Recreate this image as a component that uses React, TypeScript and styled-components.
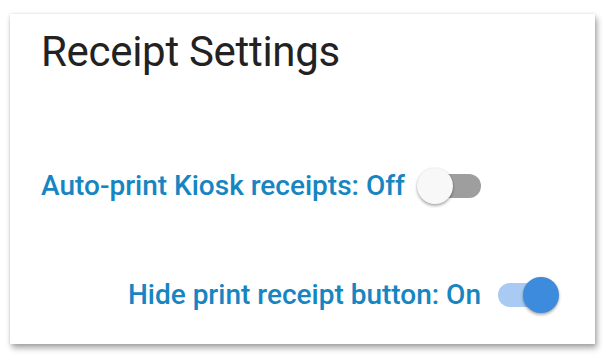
import React from "react";
import styled, { createGlobalStyle } from "styled-components";

const Global = createGlobalStyle`
  html, body {
    margin: 0;
    padding: 0;
    background: #ffffff;
    width: 607px;
    height: 358px;
    overflow: hidden;
  }
  body {
    font-family: Roboto, "Noto Sans", "Liberation Sans", sans-serif;
  }
`;

const Page = styled.div`
  padding: 14px 12px 0 10px;
`;

const Card = styled.section`
  box-sizing: border-box;
  width: 585px;
  height: 330px;
  background: #ffffff;
  box-shadow: 2px 4px 6px rgba(0, 0, 0, 0.35), 0 0 3px rgba(0, 0, 0, 0.12);
  display: flex;
  flex-direction: column;
  padding: 14px 38px 0 31px;
`;

const Title = styled.h1`
  margin: 0;
  font-family: Roboto, "Noto Sans", sans-serif;
  font-weight: 400;
  font-size: 42px;
  line-height: 48px;
  color: #222222;
  letter-spacing: -0.3px;
`;

const Row = styled.div<{ $align: "start" | "end"; $top: number }>`
  display: flex;
  align-items: center;
  justify-content: ${(p) => (p.$align === "end" ? "flex-end" : "flex-start")};
  margin-top: ${(p) => p.$top}px;
  gap: 17px;
`;

const Label = styled.span`
  font-family: Roboto, "Noto Sans", sans-serif;
  font-weight: 500;
  font-size: 28px;
  line-height: 32px;
  color: #1685c2;
`;

const Track = styled.div<{ $on: boolean }>`
  position: relative;
  width: 59px;
  height: 24px;
  border-radius: 12px;
  background: ${(p) => (p.$on ? "#a9caf2" : "#9e9e9e")};
  flex-shrink: 0;
`;

const Thumb = styled.div<{ $on: boolean }>`
  position: absolute;
  top: -6px;
  ${(p) => (p.$on ? "right: -2px;" : "left: -5px;")}
  width: 36px;
  height: 36px;
  border-radius: 50%;
  background: ${(p) => (p.$on ? "#3d8bdc" : "#f8f8f8")};
  box-shadow: 0 2px 3px rgba(0, 0, 0, 0.3), 0 0 2px rgba(0, 0, 0, 0.12);
`;

const Switch = ({ on }: { on: boolean }) => (
  <Track $on={on}>
    <Thumb $on={on} />
  </Track>
);

export default function App() {
  return (
    <>
      <Global />
      <Page>
        <Card>
          <Title>Receipt Settings</Title>
          <Row $align="start" $top={94}>
            <Label>Auto-print Kiosk receipts: Off</Label>
            <Switch on={false} />
          </Row>
          <Row $align="end" $top={77}>
            <Label>Hide print receipt button: On</Label>
            <Switch on={true} />
          </Row>
        </Card>
      </Page>
    </>
  );
}
